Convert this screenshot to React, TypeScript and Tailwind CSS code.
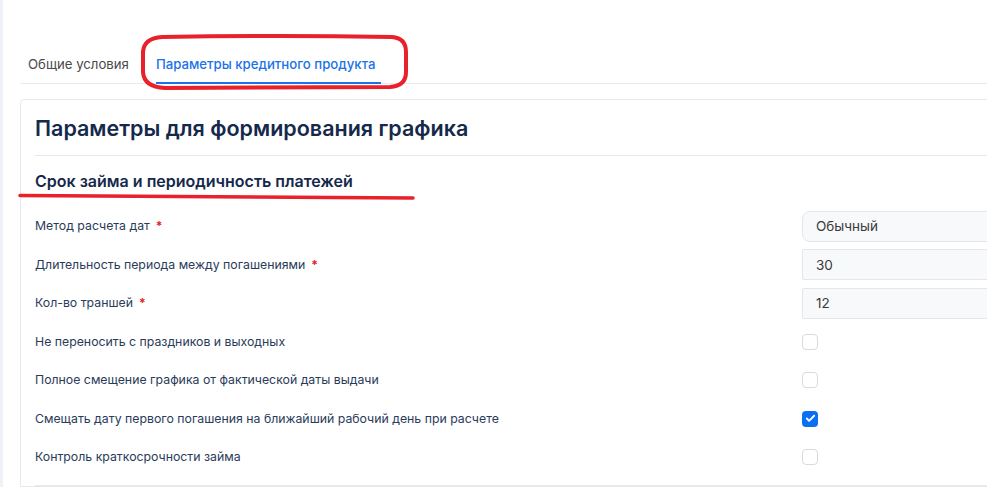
import { Check } from "lucide-react";

type Row =
  | { label: string; required?: boolean; kind: "select" | "input"; value: string }
  | { label: string; kind: "check"; checked?: boolean };

const rows: Row[] = [
  { label: "Метод расчета дат", required: true, kind: "select", value: "Обычный" },
  { label: "Длительность периода между погашениями", required: true, kind: "input", value: "30" },
  { label: "Кол-во траншей", required: true, kind: "input", value: "12" },
  { label: "Не переносить с праздников и выходных", kind: "check" },
  { label: "Полное смещение графика от фактической даты выдачи", kind: "check" },
  { label: "Смещать дату первого погашения на ближайший рабочий день при расчете", kind: "check", checked: true },
  { label: "Контроль краткосрочности займа", kind: "check" },
];

function Field({ row }: { row: Row }) {
  if (row.kind === "check") {
    return row.checked ? (
      <span className="w-[16px] h-[16px] rounded-[4px] bg-[#0b6ff2] flex items-center justify-center">
        <Check className="w-[11px] h-[11px] text-white" strokeWidth={4} />
      </span>
    ) : (
      <span className="w-[16px] h-[16px] rounded-[4px] border border-[#d9dadd] bg-white" />
    );
  }
  return (
    <div
      className={`h-[31px] w-[300px] flex items-center pl-[13px] bg-[#f8f9fb] border border-[#e4e6eb] text-[13.5px] text-[#3a3a3a] ${
        row.kind === "select" ? "rounded-[8px]" : "rounded-[2px]"
      }`}
    >
      {row.value}
    </div>
  );
}

export default function App() {
  return (
    <div className="relative w-[987px] h-[487px] overflow-hidden bg-white font-['Inter','Noto_Sans',sans-serif]">
      <div className="flex h-full">
        <div className="w-[3px] shrink-0 bg-[#eef1f7]" />
        <div className="flex-1 pl-[17px] pt-[55px]">
          {/* Tabs */}
          <div className="flex gap-[27px] border-b border-[#e9eaed] w-[1200px] pl-[8px]">
            <div className="pb-[10px] text-[13.2px] text-[#4a4a4a] leading-[18px]">Общие условия</div>
            <div className="pb-[9px] pr-[6px] text-[13.2px] font-medium text-[#1a73e8] leading-[18px] border-b-2 border-[#1a73e8] -mb-px">
              Параметры кредитного продукта
            </div>
          </div>

          {/* Card */}
          <div className="mt-[15px] w-[1200px] border border-[#e6e8ec] rounded-tl-[4px] px-[14px] pt-[14px]">
            <h1 className="text-[21.5px] leading-[28px] font-semibold text-[#15294b] pb-[13px] border-b border-[#e6e8ec]">
              Параметры для формирования графика
            </h1>
            <h2 className="text-[16px] leading-[20px] font-semibold text-[#15294b] pt-[15px] pb-[16px]">
              Срок займа и периодичность платежей
            </h2>
            <div className="pb-[8px] border-b border-[#e6e8ec]">
              {rows.map((row) => (
                <div key={row.label} className="grid grid-cols-[767px_1fr] items-center h-[38.5px]">
                  <div className="text-[12.3px] text-[#2a3b5a] flex items-center gap-[6px]">
                    <span>{row.label}</span>
                    {"required" in row && row.required && (
                      <span className="text-[#e0202a] text-[12px] font-bold leading-none">*</span>
                    )}
                  </div>
                  <div className="flex items-center">
                    <Field row={row} />
                  </div>
                </div>
              ))}
            </div>
          </div>
        </div>
      </div>

      {/* Red annotations */}
      <svg className="absolute left-0 top-0 pointer-events-none" width="987" height="487">
        <path
          d="M162 37 Q280 35 392 37 Q406 38 406 52 L406 72 Q406 86 390 87 L165 88 Q144 87 143 72 L143 52 Q144 38 162 37 Z"
          fill="none"
          stroke="#e8212b"
          strokeWidth="4"
        />
        <path d="M20 195.5 L413 198" fill="none" stroke="#e8212b" strokeWidth="3.5" strokeLinecap="round" />
      </svg>
    </div>
  );
}
